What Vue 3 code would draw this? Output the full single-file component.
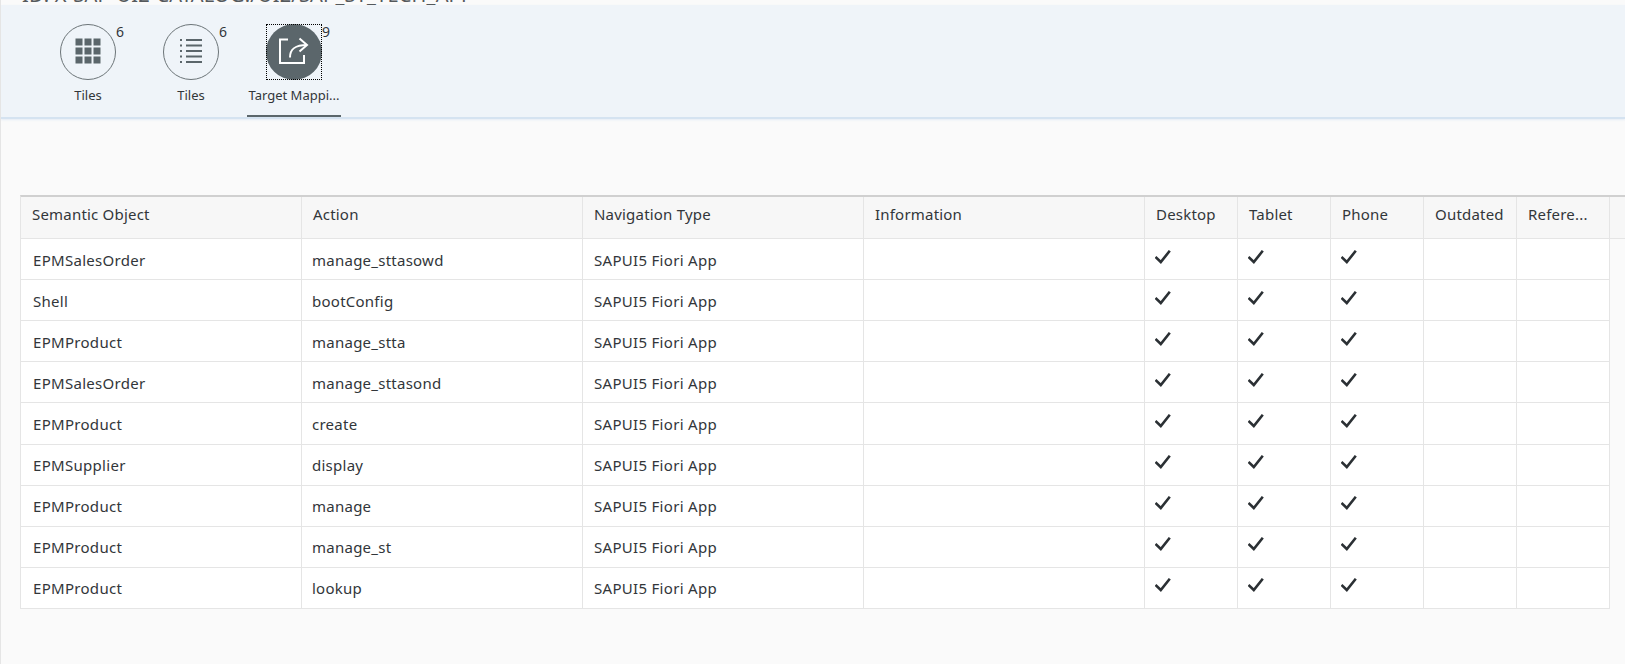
<template>
  <div class="page">
    <div class="title-strip">
      <span class="title">ID: X-SAP-UI2-CATALOG:/UI2/SAP_ST_TECH_APP</span>
    </div>
    <div class="tabs">
      <div v-for="tab in tabs" :key="tab.icon" class="tab" :class="{ selected: tab.selected }">
        <div class="tab-top">
          <div class="circle">
            <svg v-if="tab.icon === 'grid'" width="26" height="26" viewBox="0 0 26 26">
              <g fill="#5b666b">
                <rect x="0.5" y="0.5" width="7" height="7" /><rect x="9.5" y="0.5" width="7" height="7" /><rect x="18.5" y="0.5" width="7" height="7" />
                <rect x="0.500" y="9.500" width="7" height="7" /><rect x="9.5" y="9.500" width="7" height="7" /><rect x="18.5" y="9.500" width="7" height="7" />
                <rect x="0.5" y="18.500" width="7" height="7" /><rect x="9.5" y="18.500" width="7" height="7" /><rect x="18.5" y="18.500" width="7" height="7" />
              </g>
            </svg>
            <svg v-else-if="tab.icon === 'list'" width="22" height="24" viewBox="0 0 22 24">
              <g fill="#5b666b">
                <rect x="0" y="0" width="2" height="2" /><rect x="6" y="0" width="16" height="2" />
                <rect x="0" y="5.500" width="2" height="2" /><rect x="6" y="5.500" width="16" height="2" />
                <rect x="0" y="11" width="2" height="2" /><rect x="6" y="11" width="16" height="2" />
                <rect x="0" y="16.500" width="2" height="2" /><rect x="6" y="16.500" width="16" height="2" />
                <rect x="0" y="22" width="2" height="2" /><rect x="6" y="22" width="16" height="2" />
              </g>
            </svg>
            <svg v-else width="30" height="28" viewBox="0 0 30 28" fill="none" stroke="#fff" stroke-width="2">
              <path d="M9 2.500H1V26H25V18" />
              <path d="M11 20.500C11 12 16 8 28 8" />
              <path d="M20.500 1.500L28 8L20.500 14.500" />
            </svg>
          </div>
          <span class="count">{{ tab.count }}</span>
        </div>
        <div class="tab-label">{{ tab.label }}</div>
      </div>
    </div>
    <div class="content">
      <div class="table">
        <div class="row head">
          <div v-for="col in columns" :key="col" class="cell">{{ col }}</div>
          <div class="cell filler"></div>
        </div>
        <div v-for="(r, i) in rows" :key="i" class="row">
          <div class="cell first">{{ r[0] }}</div>
          <div class="cell action">{{ r[1] }}</div>
          <div class="cell">SAPUI5 Fiori App</div>
          <div class="cell"></div>
          <div v-for="d in 3" :key="d" class="cell check">
            <svg width="16" height="14" viewBox="0 0 16 14" fill="none" stroke="#2b3034" stroke-width="2.600">
              <path d="M0.500 7L5.800 12L14.800 0.800" />
            </svg>
          </div>
          <div class="cell"></div>
          <div class="cell"></div>
          <div class="filler-body"></div>
        </div>
      </div>
    </div>
  </div>
</template>

<script setup>
const tabs = [
  { icon: 'grid', count: 6, label: 'Tiles' },
  { icon: 'list', count: 6, label: 'Tiles' },
  { icon: 'share', count: 9, label: 'Target Mappi...', selected: true }
]

const columns = ['Semantic Object', 'Action', 'Navigation Type', 'Information', 'Desktop', 'Tablet', 'Phone', 'Outdated', 'Refere...']

const rows = [
  ['EPMSalesOrder', 'manage_sttasowd'],
  ['Shell', 'bootConfig'],
  ['EPMProduct', 'manage_stta'],
  ['EPMSalesOrder', 'manage_sttasond'],
  ['EPMProduct', 'create'],
  ['EPMSupplier', 'display'],
  ['EPMProduct', 'manage'],
  ['EPMProduct', 'manage_st'],
  ['EPMProduct', 'lookup']
]
</script>

<style>
html, body {
  overflow: hidden;
  background: #fafafa;
}
</style>

<style scoped>
.page {
  width: 1625px;
  height: 664px;
  overflow: hidden;
  background: #fafafa;
  font-family: "Noto Sans", "Open Sans", sans-serif;
  font-size: 15px;
  color: #32363a;
  border-left: 1px solid #e5e5e5;
  box-sizing: border-box;
}
.title-strip {
  height: 5px;
  background: #fafafa;
  overflow: hidden;
  padding-left: 21px;
}
.title {
  display: block;
  margin-top: -17px;
  font-size: 20px;
  line-height: 24px;
  letter-spacing: 0.2px;
  white-space: nowrap;
  color: #55595c;
}
.tabs {
  height: 114px;
  box-sizing: border-box;
  background: #eff4f9;
  border-bottom: 2px solid #d5e3f1;
  box-shadow: 0 1px 2px rgba(213, 227, 241, 0.6);
  display: flex;
  padding-left: 59px;
}
.tab {
  position: relative;
  width: 103px;
  padding-top: 19px;
}
.tab-top {
  display: flex;
}
.circle {
  position: relative;
  width: 56px;
  height: 56px;
  box-sizing: border-box;
  border: 1px solid #6c7478;
  border-radius: 50%;
  display: flex;
  align-items: center;
  justify-content: center;
}
.circle svg {
  margin-top: -3px;
}
.count {
  font-size: 14px;
  line-height: 16px;
}
.tab-label {
  width: 56px;
  margin-top: 6px;
  font-size: 13px;
  line-height: 18px;
  text-align: center;
  white-space: nowrap;
  display: flex;
  justify-content: center;
}
.selected .circle {
  background: #5b666b;
  border: 0;
}
.selected .circle::before {
  content: "";
  position: absolute;
  inset: 0;
  border: 1px dotted #000;
}
.selected::after {
  content: "";
  position: absolute;
  left: -19px;
  bottom: 0;
  width: 94px;
  height: 2px;
  background: #5b666b;
}
.content {
  padding: 76px 0 0 19px;
}
.table {
  border-top: 2px solid #d0d0d0;
  border-left: 1px solid #e5e5e5;
  width: 1605px;
}
.row {
  display: grid;
  grid-template-columns: repeat(4, 281px) repeat(5, 93px) 1fr;
  height: 41.120px;
  background: #fff;
}
.row.head {
  height: 42px;
  background: #f7f7f7;
}
.cell {
  display: flex;
  align-items: center;
  padding-left: 11px;
  box-sizing: border-box;
  border-right: 1px solid #e5e5e5;
  border-bottom: 1px solid #e5e5e5;
  white-space: nowrap;
  letter-spacing: 0.3px;
  padding-top: 1px;
}
.head .cell {
  padding-top: 0;
  padding-bottom: 7px;
  letter-spacing: 0.2px;
}
.head .filler {
  border-right: 0;
}
.cell.first {
  padding-left: 12px;
}
.cell.action {
  padding-left: 10px;
  letter-spacing: 0.25px;
}
.filler-body {
  background: #fafafa;
}
.cell.check {
  padding-left: 10px;
  padding-top: 0;
  padding-bottom: 5px;
}
</style>
